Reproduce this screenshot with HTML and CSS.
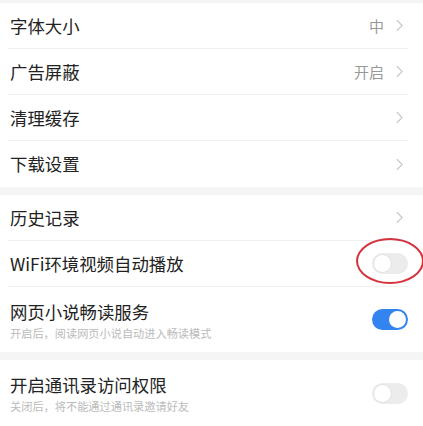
FILE: index.html
```html
<!DOCTYPE html>
<html lang="zh-CN">
<head>
<meta charset="utf-8">
<link rel="stylesheet" href="styles.css">
</head>
<body>
<div class="page">
  <section class="group">
    <div class="row"><span class="title">字体大小</span><span class="value">中</span><svg class="chev" viewBox="0 0 8 14"><path d="M1 1 L7 7 L1 13"/></svg></div>
    <div class="row"><span class="title">广告屏蔽</span><span class="value">开启</span><svg class="chev" viewBox="0 0 8 14"><path d="M1 1 L7 7 L1 13"/></svg></div>
    <div class="row"><span class="title">清理缓存</span><svg class="chev" viewBox="0 0 8 14"><path d="M1 1 L7 7 L1 13"/></svg></div>
    <div class="row last"><span class="title">下载设置</span><svg class="chev" viewBox="0 0 8 14"><path d="M1 1 L7 7 L1 13"/></svg></div>
  </section>
  <section class="group">
    <div class="row"><span class="title">历史记录</span><svg class="chev" viewBox="0 0 8 14"><path d="M1 1 L7 7 L1 13"/></svg></div>
    <div class="row"><span class="title">WiFi环境视频自动播放</span><span class="toggle"><span class="knob"></span></span><span class="mark"></span></div>
    <div class="row tall last"><div class="texts"><div class="title">网页小说畅读服务</div><div class="sub">开启后，阅读网页小说自动进入畅读模式</div></div><span class="toggle on"><span class="knob"></span></span></div>
  </section>
  <section class="group">
    <div class="row tall last"><div class="texts"><div class="title">开启通讯录访问权限</div><div class="sub">关闭后，将不能通过通讯录邀请好友</div></div><span class="toggle"><span class="knob"></span></span></div>
  </section>
</div>
</body>
</html>
```

FILE: styles.css
```css
html, body {
  margin: 0;
  padding: 0;
  background: #f5f5f5;
  font-family: "Noto Sans CJK SC", "Noto Sans", sans-serif;
  overflow: hidden;
}
.page {
  padding-top: 3px;
  display: flex;
  flex-direction: column;
  gap: 8px;
}
.group {
  background: #fff;
}
.row {
  position: relative;
  display: flex;
  align-items: center;
  height: 46px;
  box-sizing: border-box;
  margin: 0 15px 0 8px;
  padding-left: 2px;
  border-bottom: 1px solid #f0f0f0;
}
.row.last {
  border-bottom: none;
}
.row.tall {
  height: 67px;
  align-items: flex-start;
  padding-top: 14px;
}
.row.tall .toggle {
  align-self: center;
  margin-top: -14px;
}
.group:nth-child(2) .row.tall { height: 65px; }
.title {
  font-size: 17.4px;
  line-height: 22px;
  color: #222;
  flex: 1;
}
.texts {
  flex: 1;
}
.sub {
  font-size: 11.2px;
  line-height: 16px;
  color: #bbb;
  margin-top: 2px;
}
.value {
  font-size: 15px;
  color: #999;
  margin-right: 12px;
}
.chev {
  width: 7px;
  height: 13px;
  margin-right: 5px;
  fill: none;
  stroke: #c8c8c8;
  stroke-width: 1.3;
}
.toggle {
  position: relative;
  width: 36px;
  height: 21px;
  border-radius: 11px;
  background: #ececec;
  box-sizing: border-box;
}
.toggle .knob {
  position: absolute;
  left: 2px;
  top: 2px;
  width: 17px;
  height: 17px;
  border-radius: 50%;
  background: #fff;
  box-shadow: 0 0 2px rgba(0,0,0,0.12);
}
.toggle.on {
  background: #3384f0;
}
.toggle.on .knob {
  left: auto;
  right: 2px;
  box-shadow: none;
}
.mark {
  position: absolute;
  left: 348px;
  top: -3px;
  width: 68px;
  height: 46px;
  border: 2px solid #d4333c;
  border-radius: 50%;
  box-sizing: border-box;
}
```
